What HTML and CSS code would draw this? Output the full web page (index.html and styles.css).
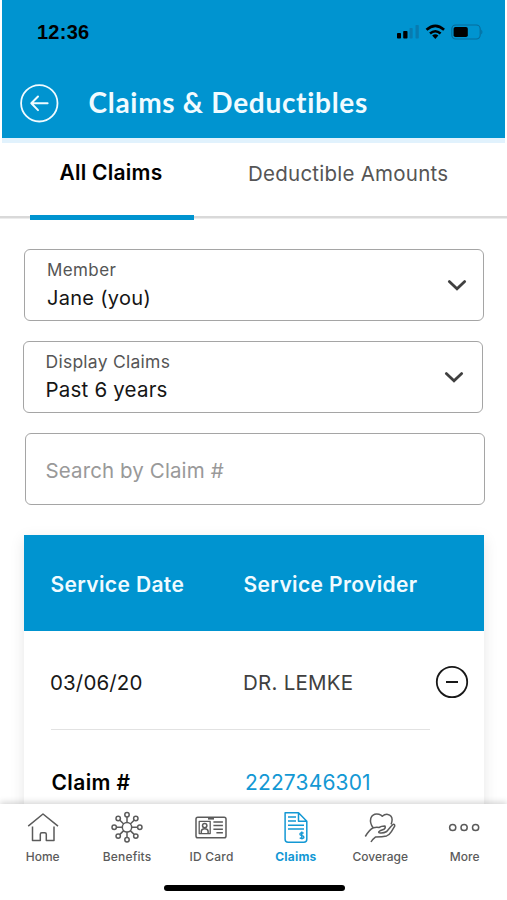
FILE: index.html
```html
<!DOCTYPE html>
<html lang="en">
<head>
<meta charset="utf-8">
<title>Claims &amp; Deductibles</title>
<link rel="stylesheet" href="styles.css">
</head>
<body>
<div class="app">
  <header class="header">
    <div class="status">
      <span class="time">12:36</span>
      <svg class="status-icons" width="88" height="20" viewBox="0 0 88 20">
        <rect x="1" y="11" width="4" height="5.5" rx=".8"/>
        <rect x="7.2" y="9" width="4.3" height="7.5" rx=".8"/>
        <g fill="#087bb0"><rect x="13.5" y="6" width="3.2" height="10.5" rx=".8"/><rect x="19.5" y="3" width="3.3" height="13.5" rx=".8"/></g>
        <g fill="none" stroke="#000" stroke-width="2.6"><path d="M30.5 7.8Q39.3 0 48.1 7.8"/><path d="M34 11.5q5.3-4.5 10.6 0"/></g>
        <path d="M36.2 13.6q3.1-2.6 6.2 0l-3.1 3.4z"/>
        <rect x="55.8" y="3" width="28.4" height="14" rx="4" fill="none" stroke="#066c9b" stroke-width="1.1"/>
        <rect x="57.6" y="5" width="14.2" height="10" rx="1.8"/>
        <path d="M85.3 7.4q2.2 2.6 0 5.2z" fill="#066c9b"/>
      </svg>
    </div>
    <div class="title-row">
      <svg class="back" width="40" height="40" viewBox="0 0 40 40" fill="none" stroke="#f0fbff" stroke-linecap="round" stroke-linejoin="round">
        <circle cx="20.3" cy="20.3" r="18.2" stroke-width="1.8"/>
        <path d="M28.6 20.3H12.3M19 13.5L12.3 20.3l6.7 6.8" stroke-width="2"/>
      </svg>
      <h1>Claims &amp; Deductibles</h1>
    </div>
  </header>
  <nav class="tabs">
    <div class="tab active">All Claims</div>
    <div class="tab other">Deductible Amounts</div>
  </nav>
  <main class="content">
    <div class="field member">
      <div><div class="label">Member</div><div class="value">Jane (you)</div></div>
      <svg class="chev" width="20" height="14" viewBox="0 0 20 14"><path d="M2.3 3.6l7.7 7.2 7.7-7.2"/></svg>
    </div>
    <div class="field period">
      <div><div class="label">Display Claims</div><div class="value">Past 6 years</div></div>
      <svg class="chev" width="20" height="14" viewBox="0 0 20 14"><path d="M2.3 3.6l7.7 7.2 7.7-7.2"/></svg>
    </div>
    <div class="field search">Search by Claim #</div>
    <section class="claims">
      <div class="row head"><span class="date">Service Date</span><span class="provider">Service Provider</span></div>
      <div class="row entry">
        <span class="date">03/06/20</span><span class="provider">DR. LEMKE</span>
        <svg class="minus" width="34" height="34" viewBox="0 0 34 34" fill="none" stroke="#181818"><circle cx="17" cy="17" r="15.2" stroke-width="1.8"/><path d="M11 17h12" stroke-width="2"/></svg>
      </div>
      <div class="rule"></div>
      <div class="row detail"><span class="name">Claim #</span><a class="number">2227346301</a></div>
    </section>
  </main>
  <footer class="bottom">
    <div class="nav">
      <div class="item">
        <svg width="36" height="36" viewBox="0 0 36 36"><path d="M3.2 16.2L18 4l15 12.2M7.5 16.5V30.5h7.8v-6.2q0-1.5 1.5-1.5h3q1.5 0 1.5 1.5v6.2h7.7V16.5"/></svg>
        <span class="home">Home</span>
      </div>
      <div class="item">
        <svg width="36" height="36" viewBox="0 0 36 36"><circle cx="18" cy="17.3" r="4.7"/><path d="M18 12.6V7M18 22v5.5M13.3 17.3H7.5M22.7 17.3h5.8M14.7 14L10.9 10.2M21.3 14l3.8-3.8M14.7 20.6l-3.8 3.8M21.3 20.6l3.8 3.8"/><circle cx="18" cy="4.8" r="2.2"/><circle cx="18" cy="29.8" r="2.2"/><circle cx="5.2" cy="17.3" r="2.2"/><circle cx="30.8" cy="17.3" r="2.2"/><circle cx="9.2" cy="8.5" r="2.2"/><circle cx="26.8" cy="8.5" r="2.2"/><circle cx="9.2" cy="26.1" r="2.2"/><circle cx="26.8" cy="26.1" r="2.2"/></svg>
        <span class="benefits">Benefits</span>
      </div>
      <div class="item">
        <svg width="36" height="36" viewBox="0 0 36 36"><rect x="3" y="7.2" width="30" height="20.6" rx="1.8"/><path d="M15 8.5h6" stroke-width="2.2"/><rect x="6.2" y="11.4" width="11" height="12.2" stroke-width="1.3"/><circle cx="11.7" cy="15.6" r="2.2"/><path d="M8.3 23v-1.8q.3-2.5 3.4-2.5t3.4 2.5V23M20.4 12h9.5M20.4 15.6h9.5M20.4 19.2h9.5M23.4 22.8h6.5"/></svg>
        <span class="card">ID Card</span>
      </div>
      <div class="item active">
        <svg width="36" height="36" viewBox="0 0 36 36"><path d="M7.1 2.7H20.5l8.3 8.5v18q0 3-3 3h-15.7q-3 0-3-3zM20.5 2.7v8.5h8.3M10 7.1h8M10 11h8M10 15.2h16M10 19h16"/><path d="M25.7 23.2q-3.8-1.2-3.8 1 0 1 2 1.4t2 1.6q0 2-4.2.8M23.8 21.4v8" stroke-width="1.4"/></svg>
        <span class="claim-label">Claims</span>
      </div>
      <div class="item">
        <svg width="36" height="36" viewBox="0 0 36 36"><path d="M11 17.5Q7.6 13 8.8 8.2q2.2-5.3 8.2-3.9 2.3.6 3.3 2 2.3-2.2 5.4-1.9 4.4.7 4.4 5.4-.1 2.6-1 4.6M3.3 26.5q4.4-7.5 8.2-8.8 3-.7 5.5-.2 2.5-1.5 6-1.4.8 2.2-1 3.2l-4 1.5q-2.8 1.6.2 2.2 3.5.3 6.5-1.5l4.2-5 2.1-2q2-.7 1.7 1.6l-3.3 5.5q-2 3.2-4.8 4.3-4 1-11.2 1.2Q10.7 29 9 32"/></svg>
        <span class="coverage">Coverage</span>
      </div>
      <div class="item">
        <svg width="36" height="36" viewBox="0 0 36 36"><circle cx="5.7" cy="17.5" r="3.1"/><circle cx="17.1" cy="17.5" r="3.1"/><circle cx="28.6" cy="17.5" r="3.1"/></svg>
        <span class="more">More</span>
      </div>
    </div>
    <div class="homebar"></div>
  </footer>
</div>
</body>
</html>
```
FILE: styles.css
```css
* { box-sizing: border-box; }
body { margin: 0; background: #fff; font-family: Inter, sans-serif; }
.app { width: 507px; height: 900px; display: flex; flex-direction: column; overflow: hidden; }
.header { flex: none; height: 142.5px; margin: 0 2px; background: #0094d0; border-bottom: 5.5px solid #e1f2fd; }
.status { display: flex; justify-content: space-between; align-items: center; height: 65px; padding: 0 21px 0 35px; }
.time { margin-top: -2px; font: 700 20px/24px "Liberation Sans", sans-serif; letter-spacing: .24px; }
.status-icons { flex: none; margin-top: -2px; }
.title-row { display: flex; align-items: center; height: 72px; padding: 4px 0 0 17px; gap: 29.5px; }
.back { flex: none; }
h1 { margin: -3px 0 0; color: #f0fbff; font: 700 28px/36px Lato, sans-serif; letter-spacing: .71px; white-space: nowrap; }
.tabs { flex: none; display: flex; height: 77.5px; background: linear-gradient(#d9d9d9, #d9d9d9) 0 73px / 100% 2.5px no-repeat; }
.tab { white-space: nowrap; line-height: 24px; }
.tab.active { width: 164px; margin-left: 30px; padding: 18px 0 0 29.5px; font-size: 21px; font-weight: 600; letter-spacing: .24px; border-bottom: 5px solid #0094d0; }
.tab.other { margin-left: 54px; padding-top: 19.5px; font-size: 20.5px; letter-spacing: .24px; color: #555; }
.content { flex: 1; min-height: 0; overflow: hidden; padding-top: 29px; }
.field { width: 460px; height: 72px; border: 1.5px solid #a5a5a5; border-radius: 6px; display: flex; justify-content: space-between; align-items: center; padding: 0 16px 0 22.5px; }
.field > div { margin-top: -3px; }
.member { margin-left: 23.5px; }
.period { margin: 20px 0 0 22.5px; padding-right: 18px; padding-left: 22px; }
.search { margin: 20px 0 0 25px; padding: 3px 0 0 19.5px; font-size: 20.5px; letter-spacing: .11px; color: #999; }
.label { font-size: 17px; line-height: 28px; letter-spacing: .4px; color: #555; }
.value { font-size: 20px; line-height: 28px; letter-spacing: .3px; color: #151515; }
.period .label { font-size: 17.5px; letter-spacing: .26px; }
.period .value { font-size: 20.5px; letter-spacing: .2px; }
.chev { flex: none; fill: none; stroke: #404040; stroke-width: 2.8; stroke-linecap: round; }
.claims { margin: 29.5px 23.5px 0 24px; height: 300px; background: #fff; box-shadow: 0 4px 14px rgba(0,0,0,.1); }
.row { display: flex; align-items: center; white-space: nowrap; font-size: 20.5px; }
.head { height: 96px; padding: 3px 0 0 26.5px; background: #0094d0; color: #f0fbff; font-size: 21px; font-weight: 600; }
.date { width: 193px; }
.head .date { letter-spacing: .36px; }
.head .provider { letter-spacing: .38px; }
.entry { height: 98.5px; padding: 5px 15px 0 26px; }
.entry .date { letter-spacing: .14px; color: #181818; }
.entry .provider { color: #404040; letter-spacing: .25px; }
.minus { margin: -1px 0 0 auto; }
.rule { width: 379px; height: 1px; margin-left: 27px; background: #e2e2e2; }
.detail { height: 104px; padding-left: 27.5px; }
.name { width: 193.5px; font-size: 21px; font-weight: 600; letter-spacing: .4px; }
.number { color: #1398d4; font-size: 21px; letter-spacing: .15px; }
.bottom { flex: none; position: relative; height: 96px; background: #fff; box-shadow: 0 -2px 6px rgba(0,0,0,.16); }
.nav { display: grid; grid-template-columns: repeat(6, 84.4px); height: 80px; padding: 6px 0 0 .5px; }
.item { display: flex; flex-direction: column; align-items: center; color: #5b5b5b; font-size: 12px; font-weight: 500; line-height: 20px; }
.item svg { fill: none; stroke: currentColor; stroke-width: 1.5; stroke-linejoin: round; }
.item span { margin-top: .5px; white-space: nowrap; }
.item.active { color: #1398d4; font-weight: 700; }
.benefits { letter-spacing: .17px; }
.card { letter-spacing: .22px; }
.claim-label { letter-spacing: .24px; }
.more { letter-spacing: -.02px; }
.homebar { width: 181px; height: 6px; margin: .5px 0 0 163.5px; border-radius: 3px; background: #000; }
```
